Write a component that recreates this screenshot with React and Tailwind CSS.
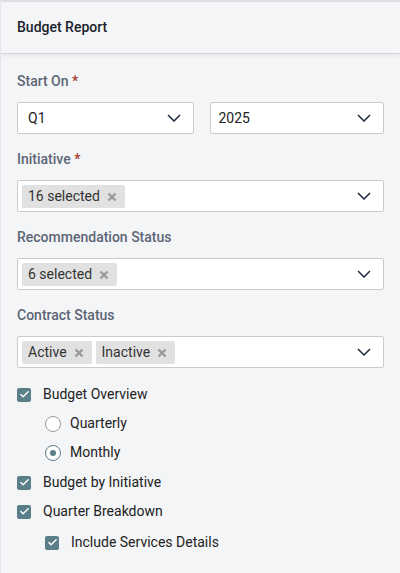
import { Check } from 'lucide-react';

function Chevron() {
  return (
    <svg width="14" height="8" viewBox="0 0 14 8" fill="none" className="shrink-0">
      <path d="M1 1l6 6 6-6" stroke="#1e2a3f" strokeWidth="1.5" />
    </svg>
  );
}

function Tag({ label }) {
  return (
    <span className="flex items-center gap-[7px] h-[23px] pl-[6px] pr-[8px] bg-[#e1e1e1] rounded-[2px] text-[14px] text-[#333]">
      {label}
      <svg width="10" height="10" viewBox="0 0 10 10" className="mt-[2px]">
        <path d="M1.5 1.5l7 7M8.5 1.5l-7 7" stroke="#9a9a9a" strokeWidth="2.4" />
      </svg>
    </span>
  );
}

function Select({ children, className = '' }) {
  return (
    <div className={`flex items-center justify-between h-[32px] bg-white border border-[#cbcbcb] rounded-[2px] pr-[12px] ${className}`}>
      <div className="flex items-center gap-[4px]">{children}</div>
      <Chevron />
    </div>
  );
}

function Label({ text, required }) {
  return (
    <div className="text-[14px] leading-[21px] font-medium text-[#5c6676] mb-[10px]">
      {text}
      {required && <span className="text-[#a8392d]"> *</span>}
    </div>
  );
}

function CheckBox({ label, className = '' }) {
  return (
    <div className={`flex items-center h-[29px] ${className}`}>
      <span className="w-[14px] h-[14px] rounded-[2px] bg-[#5a7f89] flex items-center justify-center">
        <Check size={11} color="white" strokeWidth={3} />
      </span>
      <span className="ml-[12px] text-[14px] text-[#222]">{label}</span>
    </div>
  );
}

function Radio({ label, checked }) {
  return (
    <div className="flex items-center h-[29px] pl-[28px]">
      <span className={`w-[16px] h-[16px] rounded-full border flex items-center justify-center bg-white ${checked ? 'border-[#5a7f89]' : 'border-[#9a9a9a]'}`}>
        {checked && <span className="w-[6px] h-[6px] rounded-full bg-[#5a7f89]" />}
      </span>
      <span className="ml-[9px] text-[14px] text-[#222]">{label}</span>
    </div>
  );
}

export default function App() {
  return (
    <div className="w-[400px] h-[573px] bg-[#f4f5f7] border-l border-[#e4e5e8] overflow-hidden" style={{ fontFamily: 'Roboto, sans-serif' }}>
      <div className="h-[54px] border-t-2 border-[#dedfe2] border-b border-b-[#d6d7da] flex items-center px-[16px] shadow-[0_2px_4px_rgba(0,0,0,0.06)]">
        <h1 className="text-[14px] font-medium text-[#1a1f2b]">Budget Report</h1>
      </div>

      <div className="px-[16px] pt-[17px]">
        <Label text="Start On" required />
        <div className="flex gap-[16px]">
          <Select className="flex-1 pl-[10px]">
            <span className="text-[14px] text-[#222]">Q1</span>
          </Select>
          <Select className="flex-1 pl-[8px]">
            <span className="text-[14px] text-[#222]">2025</span>
          </Select>
        </div>

        <div className="mt-[15px]">
          <Label text="Initiative" required />
          <Select className="pl-[4px]">
            <Tag label="16 selected" />
          </Select>
        </div>

        <div className="mt-[15px]">
          <Label text="Recommendation Status" />
          <Select className="pl-[4px]">
            <Tag label="6 selected" />
          </Select>
        </div>

        <div className="mt-[15px]">
          <Label text="Contract Status" />
          <Select className="pl-[4px]">
            <Tag label="Active" />
            <Tag label="Inactive" />
          </Select>
        </div>

        <div className="mt-[12px]">
          <CheckBox label="Budget Overview" />
          <Radio label="Quarterly" />
          <Radio label="Monthly" checked />
          <CheckBox label="Budget by Initiative" className="mt-[1px]" />
          <CheckBox label="Quarter Breakdown" />
          <CheckBox label="Include Services Details" className="pl-[28px] mt-[2px]" />
        </div>
      </div>
    </div>
  );
}
